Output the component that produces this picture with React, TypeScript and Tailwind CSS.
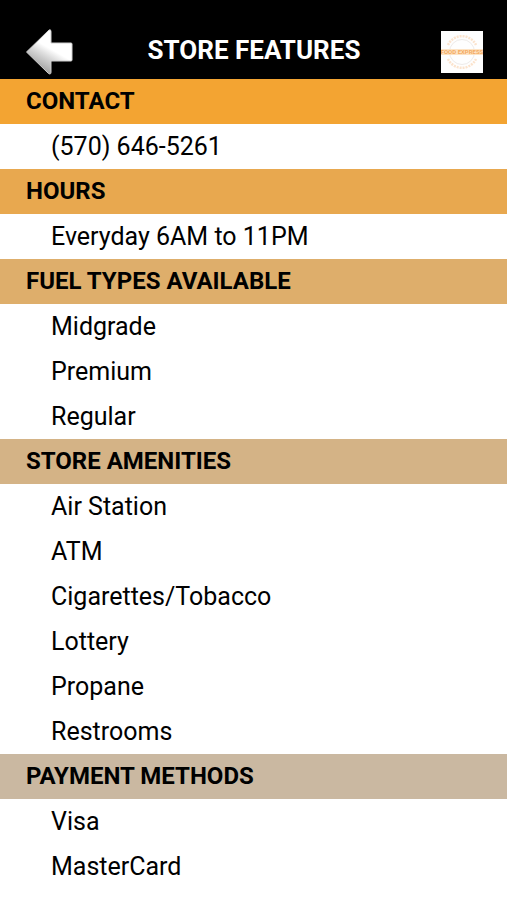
type Section = { title: string; band: string; items: string[] };

const sections: Section[] = [
  { title: "CONTACT", band: "bg-[#f3a432]", items: ["(570) 646-5261"] },
  { title: "HOURS", band: "bg-[#e8a84f]", items: ["Everyday 6AM to 11PM"] },
  { title: "FUEL TYPES AVAILABLE", band: "bg-[#deae6b]", items: ["Midgrade", "Premium", "Regular"] },
  {
    title: "STORE AMENITIES",
    band: "bg-[#d4b386]",
    items: ["Air Station", "ATM", "Cigarettes/Tobacco", "Lottery", "Propane", "Restrooms"],
  },
  { title: "PAYMENT METHODS", band: "bg-[#cab8a1]", items: ["Visa", "MasterCard"] },
];

function BackArrow() {
  return (
    <svg viewBox="0 0 48 48" className="h-12 w-12" aria-hidden="true">
      <defs>
        <linearGradient id="arrowFill" x1="0.65" y1="0.3" x2="0.3" y2="0.9">
          <stop offset="0.25" stopColor="#ffffff" />
          <stop offset="0.5" stopColor="#dcdcdc" />
          <stop offset="1" stopColor="#a0a0a0" />
        </linearGradient>
      </defs>
      <path
        d="M1.5 24 L24 2 Q26 1 26 3.5 V15 H46 Q47 15 47 16 V32 Q47 33 46 33 H26 V44 Q26 47 23.500 45.500 Z"
        fill="url(#arrowFill)"
        stroke="#d0d0d0"
        strokeWidth="1"
        strokeLinejoin="round"
      />
    </svg>
  );
}

function StoreLogo() {
  return (
    <svg viewBox="0 0 42 42" className="h-[42px] w-[42px]" role="img" aria-label="Food Express">
      <rect width="42" height="42" fill="#fefefe" />
      <circle cx="21" cy="21" r="12.500" fill="none" stroke="#eeebe9" strokeWidth="1" />
      <path
        d="M7 14 A15.500 15.500 0 0 1 35 14 M7 28 A15.500 15.500 0 0 0 35 28"
        fill="none"
        stroke="#fbe3cd"
        strokeWidth="2.500"
        strokeDasharray="2 1"
      />
      <rect x="0" y="18" width="42" height="6" fill="#fde3c4" />
      <text
        x="21"
        y="23"
        textAnchor="middle"
        fontSize="6"
        fontWeight="700"
        fill="#f4ab62"
        fontFamily="Roboto, sans-serif"
      >
        FOOD EXPRESS
      </text>
    </svg>
  );
}

export default function App() {
  return (
    <div className="min-h-screen bg-white font-[Roboto,sans-serif] text-[25px] text-black">
      <header className="flex items-end justify-between bg-black pt-7 pr-6 pb-[3px] pl-[25px] text-white">
        <button type="button" aria-label="Back">
          <BackArrow />
        </button>
        <h1 className="self-start pr-[6px] text-[26px] leading-[45px] font-bold">STORE FEATURES</h1>
        <div className="pb-[3px]">
          <StoreLogo />
        </div>
      </header>
      <main>
        {sections.map((section) => (
          <section key={section.title}>
            <h2 className={`${section.band} pl-[26px] text-[24px] leading-[45px] font-bold`}>{section.title}</h2>
            <ul>
              {section.items.map((item) => (
                <li key={item} className="pl-[51px] leading-[45px]">
                  {item}
                </li>
              ))}
            </ul>
          </section>
        ))}
      </main>
    </div>
  );
}
